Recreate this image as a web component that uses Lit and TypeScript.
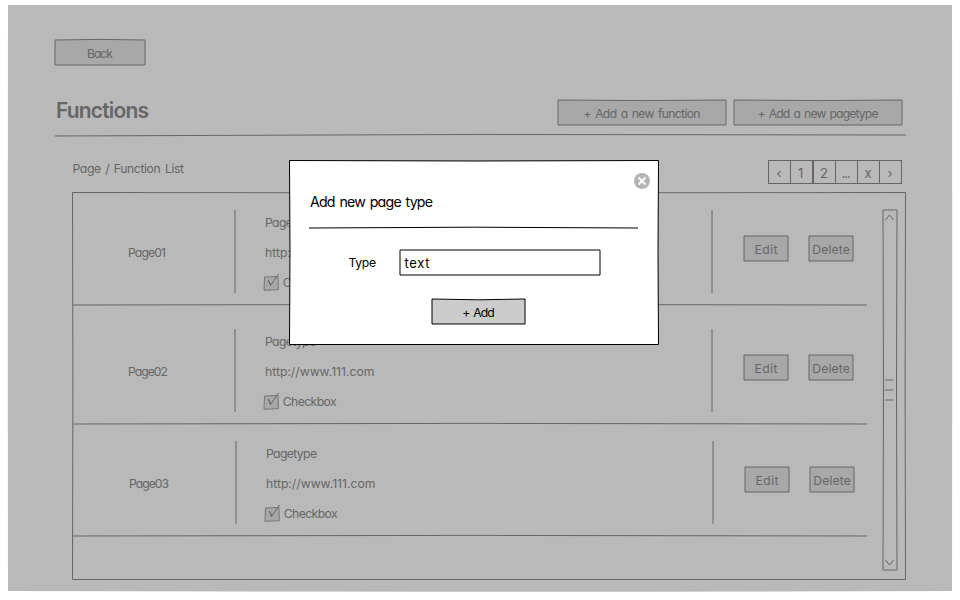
import { LitElement, html, css } from "lit";
import { customElement, property } from "lit/decorators.js";

/** Text set to a fixed measure by adjusting its tracking. */
@customElement("sketch-text")
class SketchText extends LitElement {
  @property() text = "";
  @property({ type: Number }) measure = 0;

  static styles = css`
    :host {
      display: block;
      flex: none;
      white-space: nowrap;
    }
  `;

  updated() {
    const span = this.renderRoot.querySelector("span")!;
    span.style.letterSpacing = "0px";
    const natural = span.getBoundingClientRect().width;
    const spacing = (this.measure - natural) / Math.max(1, this.text.length - 1);
    span.style.letterSpacing = `${spacing.toFixed(3)}px`;
    this.style.width = `${this.measure}px`;
  }

  render() {
    return html`<span>${this.text}</span>`;
  }
}

/** Box with a slightly bowed, hand-drawn outline. */
@customElement("sketch-box")
class SketchBox extends LitElement {
  @property({ type: Number }) w = 0;
  @property({ type: Number }) h = 0;
  @property({ type: Number }) inset = 0;
  @property({ type: Number }) top = 0;
  @property({ type: Number }) side = 0;
  @property({ type: Number }) bottom = 0;
  @property() fill = "none";
  @property() line = "#666";

  static styles = css`
    :host {
      display: block;
      flex: none;
      position: relative;
      box-sizing: border-box;
    }
    svg {
      position: absolute;
      inset: 0;
      overflow: visible;
    }
    .content {
      position: relative;
      width: 100%;
      height: 100%;
    }
  `;

  updated() {
    this.style.width = `${this.w}px`;
    this.style.height = `${this.h}px`;
  }

  render() {
    const a = this.inset;
    const r = this.w - a;
    const b = this.h - a;
    const cx = this.w / 2;
    const cy = this.h / 2;
    const d = `M${a} ${a}Q${cx} ${a + this.top * 2} ${r} ${a}Q${r - this.side * 2} ${cy} ${r} ${b}Q${cx} ${b + this.bottom * 2} ${a} ${b}Q${a + this.side * 2} ${cy} ${a} ${a}Z`;
    return html`<svg width=${this.w} height=${this.h} aria-hidden="true">
        <path d=${d} fill=${this.fill} stroke=${this.line}></path>
      </svg>
      <div class="content"><slot></slot></div>`;
  }
}

interface Row {
  name: string;
  nameWidth: number;
  cls: string;
}

const rows: Row[] = [
  { name: "Page01", nameWidth: 38, cls: "row" },
  { name: "Page02", nameWidth: 40, cls: "row tall" },
  { name: "Page03", nameWidth: 40, cls: "row shifted" },
];

const pages: [string, number][] = [
  ["‹", 5],
  ["1", 6],
  ["2", 8],
  ["...", 9],
  ["x", 7],
  ["›", 5],
];

@customElement("app-root")
class AppRoot extends LitElement {
  static styles = css`
    * {
      box-sizing: border-box;
    }
    :host {
      display: block;
      position: relative;
      width: 960px;
      height: 600px;
      overflow: hidden;
      background: #fff;
      color: #666;
      font: 12.2px/16px Inter, "Noto Sans", sans-serif;
      font-feature-settings: "cv11";
      word-spacing: 1.5px;
    }
    svg {
      display: block;
      overflow: visible;
      flex: none;
    }
    .page {
      padding: 5px 8px 8px;
    }
    .body {
      height: 586px;
      padding: 35px 46px 0 47px;
    }
    .center {
      display: flex;
      height: 100%;
      align-items: center;
      justify-content: center;
      padding-top: 2px;
    }
    .head {
      display: flex;
      align-items: flex-start;
      height: 35px;
      margin-top: 35px;
      gap: 8px;
    }
    .title {
      margin: -4px auto 0 1px;
      font-size: 21px;
      line-height: 30px;
      font-weight: 600;
    }
    .head .last {
      margin-right: 4px;
    }
    .bar {
      display: flex;
      justify-content: space-between;
      padding: 25px 4px 0 17.5px;
      height: 57px;
    }
    .crumb {
      padding-top: 1px;
    }
    .pager {
      display: flex;
    }
    .cell {
      width: 23px;
      height: 24px;
      border: 1px solid #666;
      margin-left: -1px;
      display: flex;
      align-items: center;
      justify-content: center;
      font-size: 13px;
      padding: 2px 1px 0 0;
    }
    .cell:nth-child(3),
    .cell:first-child {
      margin-left: 0;
    }
    .list {
      margin-left: 17px;
    }
    .columns {
      display: flex;
      padding-left: 1px;
      height: 100%;
    }
    .rows {
      width: 794px;
      padding-top: 1px;
    }
    .row {
      height: 112px;
      display: flex;
      flex-direction: column;
      justify-content: flex-end;
    }
    .tall {
      height: 119px;
    }
    .cols {
      display: flex;
      height: 83px;
      margin-bottom: 12px;
    }
    .shifted .cols {
      padding-left: 1px;
    }
    .rule {
      height: 1px;
      margin-bottom: -1px;
    }
    .name {
      width: 162px;
      padding: 35px 0 0 55px;
    }
    .info {
      width: 477px;
      display: flex;
      flex-direction: column;
      gap: 14px;
      padding: 5px 0 0 30px;
    }
    .check {
      display: flex;
      gap: 5px;
      margin: -0.5px 0 0 -1.3px;
    }
    .actions {
      display: flex;
      gap: 21px;
      padding: 26px 0 0 32px;
    }
    .divider {
      width: 1px;
      margin-right: -1px;
      height: 83px;
    }
    .scroll {
      margin: 18px 0 0 16px;
    }
    .modal {
      position: absolute;
      left: 289px;
      top: 160px;
      color: #000;
    }
    .dialog {
      padding: 32px 20px 0;
    }
    .heading {
      font-size: 14.2px;
      line-height: 19px;
      padding-left: 1px;
      height: 36px;
    }
    .field {
      display: flex;
      gap: 23.5px;
      padding: 22px 0 0 39.5px;
    }
    .field .caption {
      padding-top: 5px;
    }
    .value {
      padding: 5px 0 0 5px;
      font-size: 13px;
    }
    .submit {
      padding: 24px 0 0 123px;
    }
    .close {
      position: absolute;
      right: 9px;
      top: 13px;
      width: 16px;
      height: 16px;
    }
  `;

  button(text: string, measure: number, w: number, bow = 0) {
    return html`<sketch-box .w=${w} .h=${25} .top=${bow} fill="#a8a8a8">
      <div class="center"><sketch-text .text=${text} .measure=${measure}></sketch-text></div>
    </sketch-box>`;
  }

  divider() {
    return html`<svg class="divider" width="1" height="83"><path d="M0 0V83" stroke="#666" /></svg>`;
  }

  row(r: Row) {
    return html`<div class=${r.cls}>
      <div class="cols">
        <div class="name"><sketch-text .text=${r.name} .measure=${r.nameWidth}></sketch-text></div>
        ${this.divider()}
        <div class="info">
          <sketch-text text="Pagetype" .measure=${51}></sketch-text>
          <sketch-text text="http://www.111.com" .measure=${109.5}></sketch-text>
          <div class="check">
            <svg width="14" height="16" fill="none" stroke="#666">
              <path d="M.5 2L14 1.5L14.3 14.7L0 15.3Z" fill="#a8a8a8" stroke="#777" />
              <path d="M4 5Q6 7 6.5 10.5Q9 6.5 14.7-1M4.5 5.5L6.5 10.5" />
            </svg>
            <sketch-text text="Checkbox" .measure=${54}></sketch-text>
          </div>
        </div>
        ${this.divider()}
        <div class="actions">${this.button("Edit", 23, 44)}${this.button("Delete", 37.5, 44)}</div>
      </div>
      <svg class="rule" width="794" height="1"><path d="M0 0Q397-1.2 794 0" stroke="#666" fill="none" /></svg>
    </div>`;
  }

  render() {
    return html`
      <div class="page">
        <sketch-box .w=${944} .h=${586} .bottom=${0.7} .side=${-0.2} fill="#b9b9b9" line="none">
          <div class="body">
            ${this.button("Back", 26, 90, -0.6)}
            <div class="head">
              <div class="title"><sketch-text text="Functions" .measure=${93}></sketch-text></div>
              ${this.button("+ Add a new function", 117, 168, 0.6)}
              <div class="last">${this.button("+ Add a new pagetype", 121, 168, 0.6)}</div>
            </div>
            <svg class="rule" width="851" height="1"><path d="M0 1Q425-1.6 851 0" stroke="#666" fill="none" /></svg>
            <div class="bar">
              <div class="crumb"><sketch-text text="Page / Function List" .measure=${111.5}></sketch-text></div>
              <div class="pager">
                ${pages.map(([t, m]) => html`<div class="cell"><sketch-text .text=${t} .measure=${m}></sketch-text></div>`)}
              </div>
            </div>
            <sketch-box class="list" .w=${834} .h=${388} .inset=${0.5} .top=${0.4} .side=${0.4}>
              <div class="columns">
                <div class="rows">${rows.map((r) => this.row(r))}</div>
                <div class="scroll">
                  <sketch-box .w=${14} .h=${360} .side=${0.5}>
                    <svg width="14" height="360" fill="none" stroke="#666">
                      <path d="M2.5 10L6.5 5L10.5 10M2.5 350L6.5 355L10.5 350M2 170H10M2 180H10M2 190H10" />
                    </svg>
                  </sketch-box>
                </div>
              </div>
            </sketch-box>
          </div>
        </sketch-box>
      </div>
      <div class="modal" role="dialog">
        <sketch-box .w=${370} .h=${185} .inset=${0.5} .top=${0.5} .side=${0.5} fill="#fff" line="#000">
          <div class="dialog">
            <div class="heading"><sketch-text text="Add new page type" .measure=${123}></sketch-text></div>
            <svg class="rule" width="329" height="1"><path d="M0 0Q165-1.6 329 0" stroke="#000" fill="none" /></svg>
            <div class="field">
              <div class="caption"><sketch-text text="Type" .measure=${27.5}></sketch-text></div>
              <sketch-box .w=${200} .h=${25} line="#000">
                <div class="value"><sketch-text text="text" .measure=${25}></sketch-text></div>
              </sketch-box>
            </div>
            <div class="submit">
              <sketch-box .w=${93} .h=${25} .top=${0.8} fill="#ccc" line="#000">
                <div class="center"><sketch-text text="+ Add" .measure=${32.5}></sketch-text></div>
              </sketch-box>
            </div>
          </div>
          <svg class="close" viewBox="0 0 16 16">
            <circle cx="8" cy="8" r="8" fill="#b4b4b4" />
            <path d="M4.5 4.5L11.5 11.5M11.5 4.5L4.5 11.5" stroke="#fff" stroke-width="2" />
          </svg>
        </sketch-box>
      </div>
    `;
  }
}
